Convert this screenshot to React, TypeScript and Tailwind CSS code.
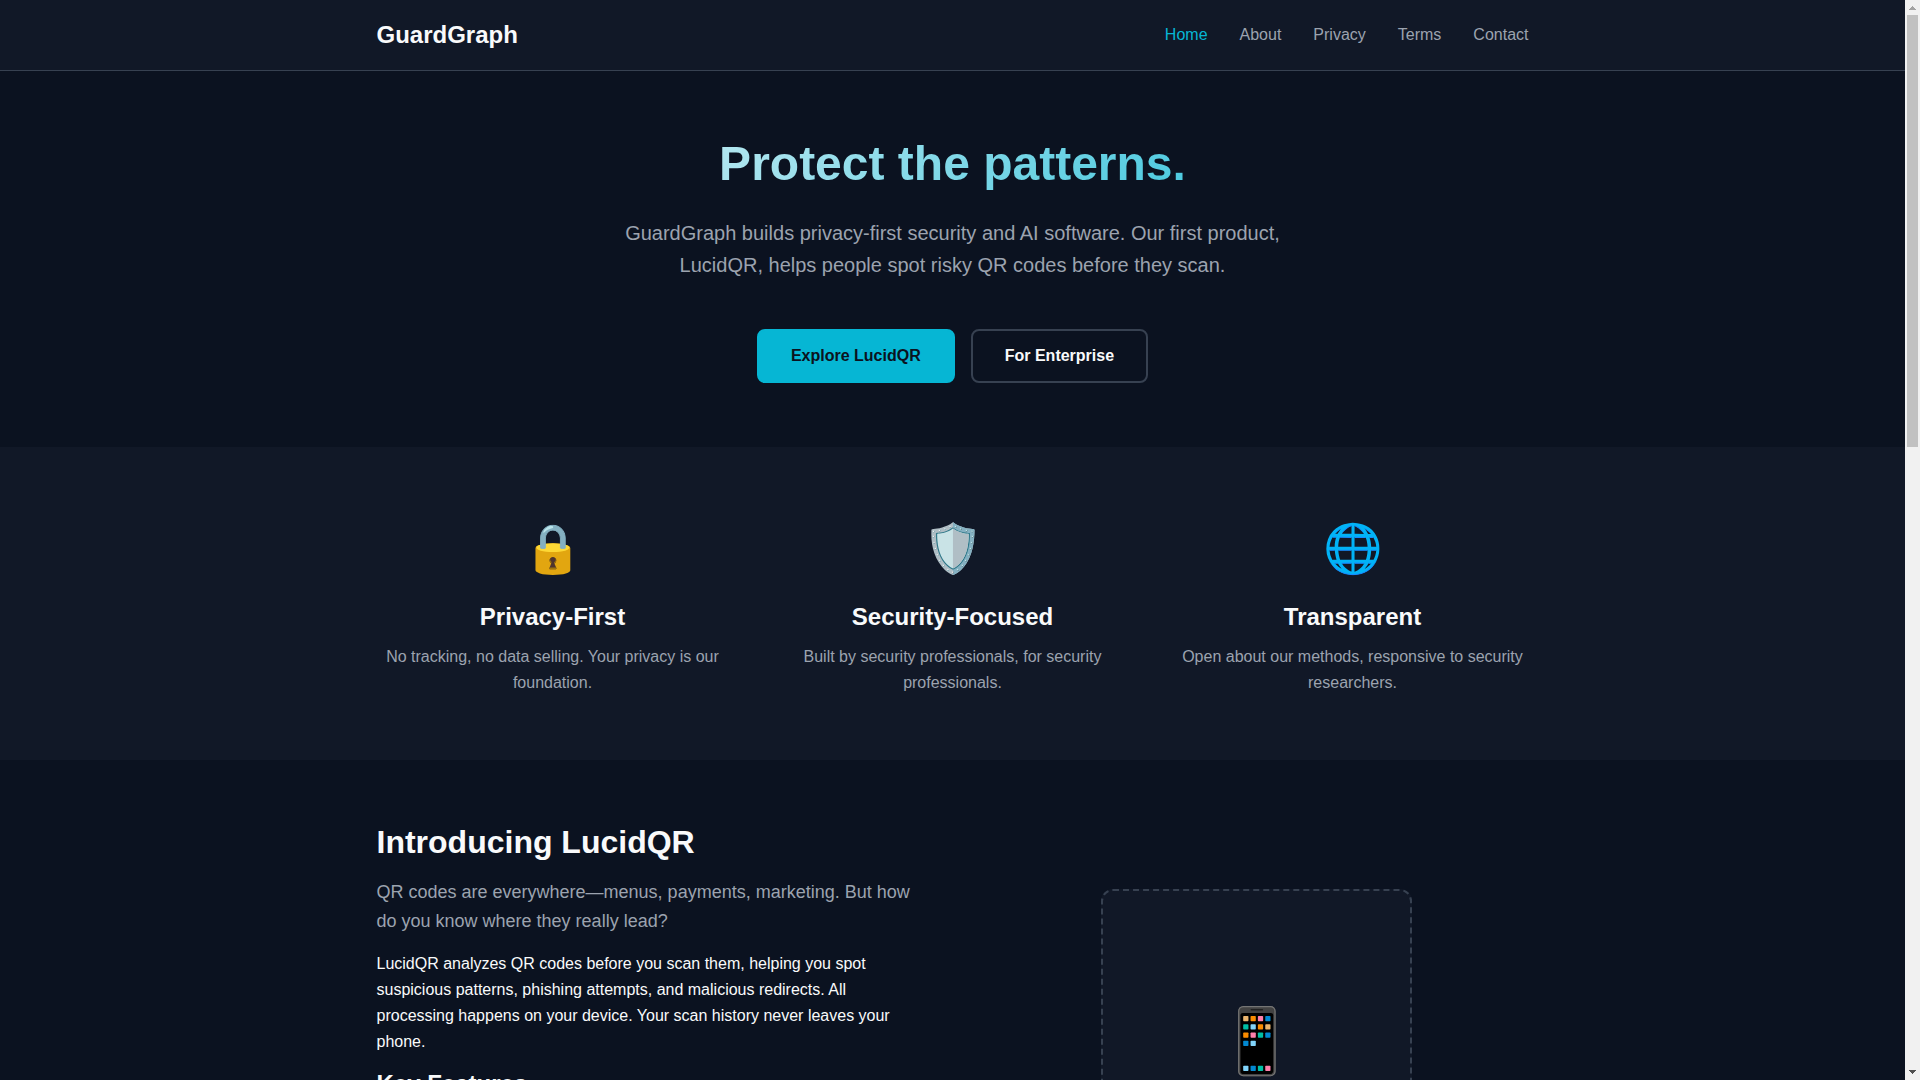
const navLinks = [
  { label: "Home", href: "#home", active: true },
  { label: "About", href: "#about", active: false },
  { label: "Privacy", href: "#privacy", active: false },
  { label: "Terms", href: "#terms", active: false },
  { label: "Contact", href: "#contact", active: false },
];

const values = [
  {
    icon: "🔒",
    title: "Privacy-First",
    text: "No tracking, no data selling. Your privacy is our foundation.",
  },
  {
    icon: "🛡️",
    title: "Security-Focused",
    text: "Built by security professionals, for security professionals.",
  },
  {
    icon: "🌐",
    title: "Transparent",
    text: "Open about our methods, responsive to security researchers.",
  },
];

function Header() {
  return (
    <header className="border-b border-[#374151] bg-[#111827]">
      <div className="mx-auto flex h-[70px] max-w-[1200px] items-center justify-between px-6">
        <a href="#home" className="text-2xl font-bold">
          GuardGraph
        </a>
        <nav>
          <ul className="flex gap-8">
            {navLinks.map((link) => (
              <li key={link.label}>
                <a
                  href={link.href}
                  className={
                    link.active
                      ? "text-[#06b6d4]"
                      : "text-[#9ca3af] hover:text-[#06b6d4]"
                  }
                >
                  {link.label}
                </a>
              </li>
            ))}
          </ul>
        </nav>
      </div>
    </header>
  );
}

function Hero() {
  return (
    <section id="home" className="py-16">
      <div className="mx-auto max-w-[1200px] px-6 text-center">
        <h1 className="mb-6 bg-[linear-gradient(135deg,#f9fafb,#06b6d4)] bg-clip-text text-5xl leading-[58px] font-bold text-transparent">
          Protect the patterns.
        </h1>
        <p className="mx-auto mb-12 max-w-[700px] text-xl leading-8 text-[#9ca3af]">
          GuardGraph builds privacy-first security and AI software. Our first
          product, LucidQR, helps people spot risky QR codes before they scan.
        </p>
        <div className="flex flex-wrap justify-center gap-4">
          <a
            href="#lucidqr"
            className="rounded-lg border-2 border-[#06b6d4] bg-[#06b6d4] px-8 py-3 leading-[26px] font-semibold text-[#0b1220]"
          >
            Explore LucidQR
          </a>
          <a
            href="#enterprise"
            className="rounded-lg border-2 border-[#374151] px-8 py-3 leading-[26px] font-semibold"
          >
            For Enterprise
          </a>
        </div>
      </div>
    </section>
  );
}

function Values() {
  return (
    <section className="bg-[#111827] py-16">
      <div className="mx-auto grid max-w-[1200px] gap-12 px-6 text-center md:grid-cols-3">
        {values.map((value) => (
          <div key={value.title}>
            <div className="mb-4 text-5xl leading-[76px]">{value.icon}</div>
            <h3 className="mb-[13px] text-2xl leading-7 font-bold">
              {value.title}
            </h3>
            <p className="leading-[26px] text-[#9ca3af]">{value.text}</p>
          </div>
        ))}
      </div>
    </section>
  );
}

function LucidQR() {
  return (
    <section id="lucidqr" className="py-16">
      <div className="mx-auto grid max-w-[1200px] gap-16 px-6 md:grid-cols-2">
        <div>
          <h2 className="mb-[18px] text-[32px] leading-9 font-bold">
            Introducing LucidQR
          </h2>
          <p className="mb-[15px] text-lg leading-[29px] text-[#9ca3af]">
            QR codes are everywhere—menus, payments, marketing. But how do you
            know where they really lead?
          </p>
          <p className="mb-[15px] leading-[26px]">
            LucidQR analyzes QR codes before you scan them, helping you spot
            suspicious patterns, phishing attempts, and malicious redirects. All
            processing happens on your device. Your scan history never leaves
            your phone.
          </p>
          <h3 className="text-2xl leading-7 font-bold">Key Features</h3>
        </div>
        <div className="flex justify-center pt-[65px]">
          <div className="w-full max-w-[311px] rounded-xl border-2 border-dashed border-[#374151] bg-[#111827] py-24 text-center">
            <div className="text-[64px] leading-[108px]">📱</div>
          </div>
        </div>
      </div>
    </section>
  );
}

function ScrollBar() {
  return (
    <div
      aria-hidden="true"
      className="flex w-[15px] shrink-0 flex-col items-center bg-[#f1f1f1]"
    >
      <svg width="15" height="15" viewBox="0 0 15 15" fill="#a3a3a3">
        <path d="M7 6h1v1h1v1h1v1h1v1H4V9h1V8h1V7h1z" />
      </svg>
      <div className="flex w-full flex-1 flex-col px-0.5">
        <div className="h-7/17 bg-[#c1c1c1]" />
      </div>
      <svg width="15" height="15" viewBox="0 0 15 15" fill="#505050">
        <path d="M4 5h7v1h-1v1H9v1H8v1H7V8H6V7H5V6H4z" />
      </svg>
    </div>
  );
}

export default function App() {
  return (
    <div className="flex h-screen bg-[#0b1220] font-['Liberation_Sans',Arial,sans-serif] text-base text-[#f9fafb]">
      <main className="min-w-0 flex-1 overflow-hidden">
        <Header />
        <Hero />
        <Values />
        <LucidQR />
      </main>
      <ScrollBar />
    </div>
  );
}
